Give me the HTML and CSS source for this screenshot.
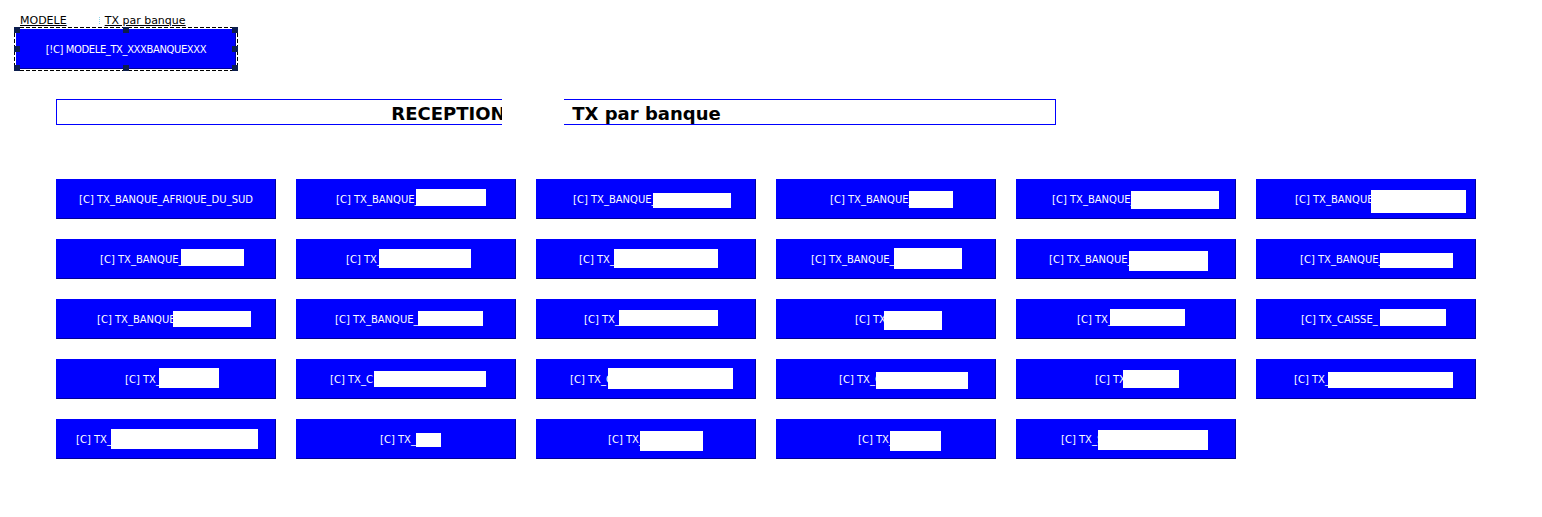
FILE: index.html
```html
<!DOCTYPE html>
<html lang="fr">
<head>
<meta charset="utf-8">
<title>TX par banque</title>
<link rel="stylesheet" href="styles.css">
</head>
<body>
<div class="page">
  <div class="tabs">
    <span class="tab tab-model">MODELE</span>
    <span class="tab-mark"></span>
    <span class="tab tab-tx">TX par banque</span>
  </div>

  <div class="sel">
    <div class="btn btn-model"><span class="t">[!C] MODELE_TX_XXXBANQUEXXX</span></div>
    <i class="h h-tl"></i><i class="h h-tm"></i><i class="h h-tr"></i>
    <i class="h h-ml"></i><i class="h h-mr"></i>
    <i class="h h-bl"></i><i class="h h-bm"></i><i class="h h-br"></i>
  </div>

  <div class="title">
    <span class="title-a">RECEPTION</span><span class="title-r"></span><span class="title-b">TX par banque</span>
  </div>

  <div class="grid">
    <div class="btn"><span class="t">[C] TX_BANQUE_AFRIQUE_DU_SUD</span></div>
    <div class="btn"><span class="t tw" style="--tw:80px">[C] TX_BANQUE_</span><i class="r" style="--w:70px;--h:17px;--t:9px;--mr:-10px"></i></div>
    <div class="btn"><span class="t tw" style="--tw:80px">[C] TX_BANQUE_</span><i class="r" style="--w:78px;--h:15px;--t:13px;--mr:-12px"></i></div>
    <div class="btn"><span class="t tw" style="--tw:79px">[C] TX_BANQUE_</span><i class="r" style="--w:44px;--h:17px;--t:11px;--mr:-11px"></i></div>
    <div class="btn"><span class="t tw" style="--tw:79px">[C] TX_BANQUE_</span><i class="r" style="--w:88px;--h:18px;--t:11px;--mr:-19px"></i></div>
    <div class="btn"><span class="t tw" style="--tw:76px">[C] TX_BANQUE</span><i class="r" style="--w:95px;--h:23px;--t:10px;--mr:-29px"></i></div>

    <div class="btn"><span class="t tw" style="--tw:81px">[C] TX_BANQUE_</span><i class="r" style="--w:63px;--h:17px;--t:9px;--mr:-12px"></i></div>
    <div class="btn"><span class="t tw" style="--tw:33px">[C] TX_</span><i class="r" style="--w:92px;--h:19px;--t:9px;--mr:-5px"></i></div>
    <div class="btn"><span class="t tw" style="--tw:35px">[C] TX_</span><i class="r" style="--w:104px;--h:19px;--t:9px;--mr:-5px"></i></div>
    <div class="btn"><span class="t tw" style="--tw:83px">[C] TX_BANQUE_</span><i class="r" style="--w:68px;--h:21px;--t:8px;--mr:-1px"></i></div>
    <div class="btn"><span class="t tw" style="--tw:80px">[C] TX_BANQUE_</span><i class="r" style="--w:79px;--h:20px;--t:11px;--mr:-5px"></i></div>
    <div class="btn"><span class="t tw" style="--tw:80px">[C] TX_BANQUE_</span><i class="r" style="--w:73px;--h:15px;--t:13px;--mr:-21px"></i></div>

    <div class="btn"><span class="t tw" style="--tw:76px">[C] TX_BANQUE</span><i class="r" style="--w:78px;--h:16px;--t:11px;--mr:-16px"></i></div>
    <div class="btn"><span class="t tw" style="--tw:83px">[C] TX_BANQUE_</span><i class="r" style="--w:65px;--h:15px;--t:11px;--mr:-6px"></i></div>
    <div class="btn"><span class="t tw" style="--tw:35px">[C] TX_</span><i class="r" style="--w:99px;--h:16px;--t:10px;--mr:-10px"></i></div>
    <div class="btn"><span class="t tw" style="--tw:29px">[C] TX</span><i class="r" style="--w:58px;--h:19px;--t:11px;--mr:-25px"></i></div>
    <div class="btn"><span class="t tw" style="--tw:33px">[C] TX_</span><i class="r" style="--w:75px;--h:17px;--t:9px;--mr:-10px"></i></div>
    <div class="btn"><span class="t tw" style="--tw:79px">[C] TX_CAISSE_</span><i class="r" style="--w:66px;--h:17px;--t:9px;--mr:-15px"></i></div>

    <div class="btn"><span class="t tw" style="--tw:34px">[C] TX_</span><i class="r" style="--w:60px;--h:20px;--t:8px;--mr:-12px"></i></div>
    <div class="btn"><span class="t tw" style="--tw:44px">[C] TX_C</span><i class="r" style="--w:112px;--h:16px;--t:11px;--mr:-4px"></i></div>
    <div class="btn"><span class="t tw" style="--tw:38px">[C] TX_C</span><i class="r" style="--w:125px;--h:21px;--t:8px;--mr:-11px"></i></div>
    <div class="btn"><span class="t tw" style="--tw:37px">[C] TX_C</span><i class="r" style="--w:92px;--h:17px;--t:12px;--mr:-35px"></i></div>
    <div class="btn"><span class="t tw" style="--tw:28px">[C] TX</span><i class="r" style="--w:56px;--h:18px;--t:10px;--mr:-22px"></i></div>
    <div class="btn"><span class="t tw" style="--tw:34px">[C] TX_</span><i class="r" style="--w:125px;--h:16px;--t:12px;--mr:-15px"></i></div>

    <div class="btn"><span class="t tw" style="--tw:35px">[C] TX_</span><i class="r" style="--w:147px;--h:20px;--t:9px;--mr:-2px"></i></div>
    <div class="btn"><span class="t tw" style="--tw:36px">[C] TX_</span><i class="r" style="--w:25px;--h:14px;--t:13px;--mr:-9px"></i></div>
    <div class="btn"><span class="t tw" style="--tw:32px">[C] TX_</span><i class="r" style="--w:63px;--h:20px;--t:11px;--mr:-19px"></i></div>
    <div class="btn"><span class="t tw" style="--tw:32px">[C] TX_</span><i class="r" style="--w:51px;--h:20px;--t:11px;--mr:-27px"></i></div>
    <div class="btn"><span class="t tw" style="--tw:37px">[C] TX_S</span><i class="r" style="--w:110px;--h:20px;--t:10px;--mr:-17px"></i></div>
  </div>
</div>
</body>
</html>
```

FILE: styles.css
```css
html, body {
  margin: 0;
  padding: 0;
  background: #ffffff;
}

body {
  font-family: "DejaVu Sans", Verdana, sans-serif;
  color: #000000;
}

.page {
  display: flex;
  flex-direction: column;
  align-items: flex-start;
}

/* top tabs */
.tabs {
  display: flex;
  align-items: flex-start;
  margin: 15px 0 0 20px;
  height: 12px;
  font-size: 11px;
  line-height: 11px;
}

.tab {
  text-decoration: underline;
  white-space: pre;
}

.tab-mark {
  width: 0;
  height: 7px;
  margin: 2px 5px 0 32px;
  border-left: 1px dotted #8fd3e8;
}

/* selected model element with dashed outline */
.sel {
  position: relative;
  margin: 0 0 0 14px;
  padding: 2px;
  background:
    repeating-linear-gradient(90deg, #000 0 4px, transparent 4px 6px) left top / 100% 1px no-repeat,
    repeating-linear-gradient(90deg, #000 0 4px, transparent 4px 6px) left bottom / 100% 1px no-repeat,
    repeating-linear-gradient(180deg, #000 0 4px, transparent 4px 6px) left top / 1px 100% no-repeat,
    repeating-linear-gradient(180deg, #000 0 4px, transparent 4px 6px) right top / 1px 100% no-repeat;
}

.h {
  position: absolute;
  z-index: 1;
  width: 6px;
  height: 6px;
  background: #0c1d4e;
}

.h-tl { left: 0; top: 0; }
.h-tm { left: 50%; top: 0; margin-left: -3px; }
.h-tr { right: 0; top: 0; }
.h-ml { left: 0; top: 50%; margin-top: -3px; }
.h-mr { right: 0; top: 50%; margin-top: -3px; }
.h-bl { left: 0; bottom: 0; }
.h-bm { left: 50%; bottom: 0; margin-left: -3px; }
.h-br { right: 0; bottom: 0; }

/* buttons */
.btn {
  box-sizing: border-box;
  width: 220px;
  height: 40px;
  display: flex;
  align-items: center;
  justify-content: center;
  background: #0000ff;
  border: 1px solid #0000ff;
  border-right-color: #00009a;
  border-bottom-color: #00009a;
  color: #ffffff;
  font-size: 10px;
  overflow: hidden;
}

.btn-model .t {
  letter-spacing: -0.4px;
}

.t {
  white-space: nowrap;
  flex: none;
}

.t.tw {
  width: var(--tw);
  overflow: visible;
}

.r {
  flex: none;
  align-self: flex-start;
  width: var(--w);
  height: var(--h);
  margin-top: var(--t);
  margin-right: var(--mr);
  background: #ffffff;
}

/* title */
.title {
  box-sizing: border-box;
  width: 1000px;
  height: 26px;
  margin: 28px 0 0 56px;
  padding-top: 3px;
  display: flex;
  align-items: center;
  justify-content: center;
  border: 1px solid #0000ff;
  font-size: 18px;
  font-weight: bold;
  white-space: nowrap;
}

.title-a {
  flex: none;
  width: 111px;
  overflow: visible;
}

.title-r {
  flex: none;
  width: 62px;
  height: 32px;
  margin-right: 8px;
  background: #ffffff;
}

.title-b {
  flex: none;
}

/* grid */
.grid {
  display: grid;
  grid-template-columns: repeat(6, 220px);
  grid-auto-rows: 40px;
  gap: 20px;
  margin: 54px 0 0 56px;
}
```
